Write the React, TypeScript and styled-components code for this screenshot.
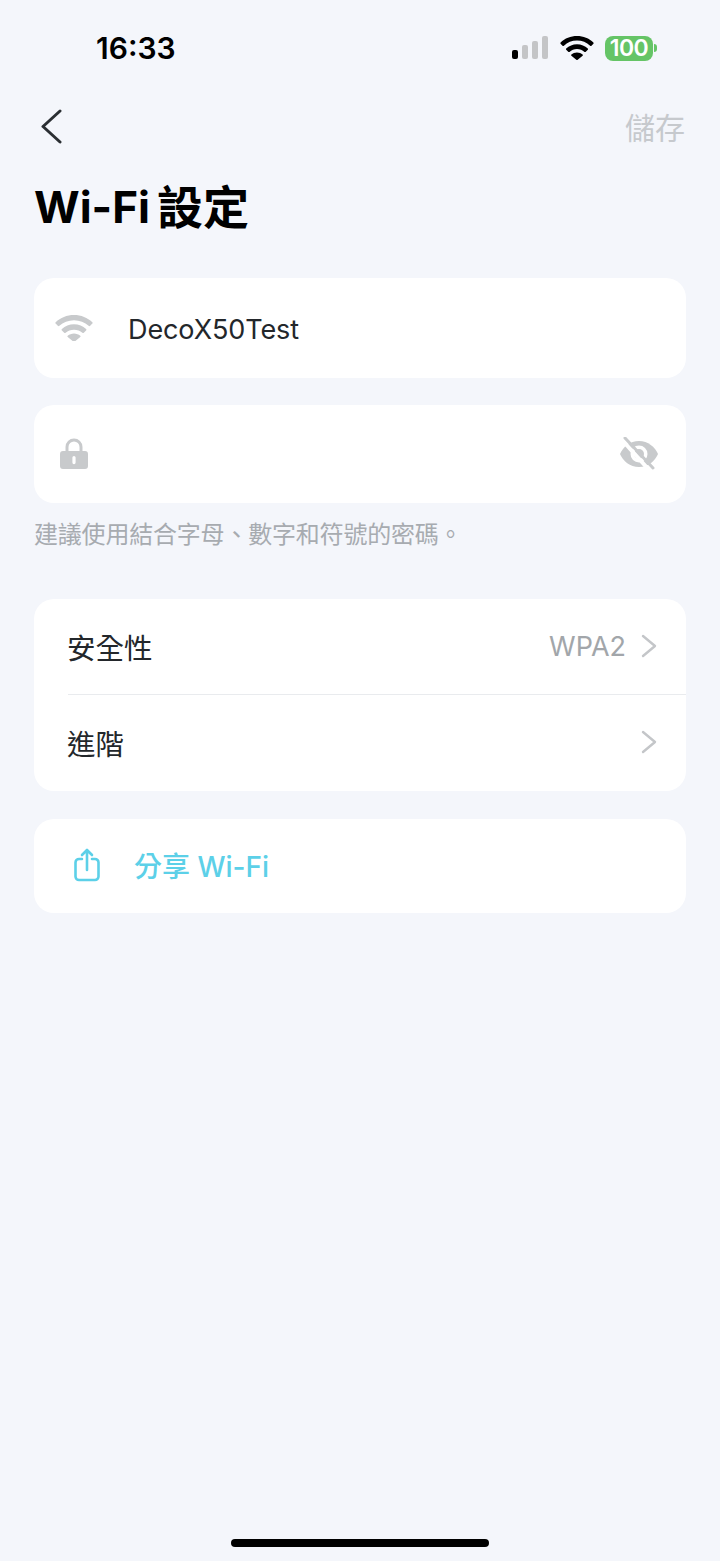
import styled, { createGlobalStyle } from "styled-components";

const GlobalStyle = createGlobalStyle`
  html, body {
    margin: 0;
    padding: 0;
    background: #f4f6fb;
  }
`;

const Page = styled.main`
  width: 720px;
  height: 1561px;
  box-sizing: border-box;
  display: flex;
  flex-direction: column;
  background: #f4f6fb;
  font-family: Inter, "Noto Sans CJK TC", sans-serif;
  color: #23272b;
  overflow: hidden;
`;

const StatusBar = styled.div`
  height: 96px;
  box-sizing: border-box;
  padding: 0 63px 0 96px;
  display: flex;
  align-items: center;
  justify-content: space-between;
`;

const Clock = styled.span`
  font-size: 30px;
  font-weight: 600;
  color: #000;
`;

const StatusIcons = styled.div`
  display: flex;
  align-items: center;
  gap: 11px;
`;

const Battery = styled.div`
  display: flex;
  align-items: center;
  gap: 1px;
`;

const BatteryBody = styled.span`
  width: 48px;
  height: 25px;
  border-radius: 8px;
  background: #65c466;
  color: #fff;
  font-size: 23px;
  font-weight: 600;
  letter-spacing: -0.5px;
  line-height: 25px;
  text-align: center;
`;

const BatteryTip = styled.span`
  width: 3px;
  height: 8px;
  border-radius: 0 3px 3px 0;
  background: #65c466;
`;

const NavBar = styled.nav`
  height: 60px;
  box-sizing: border-box;
  padding: 0 35px 0 41px;
  display: flex;
  align-items: center;
  justify-content: space-between;
`;

const SaveLabel = styled.span`
  font-size: 30px;
  color: #c6c9cd;
`;

const Title = styled.h1`
  margin: 21px 0 0 34px;
  height: 60px;
  display: flex;
  align-items: center;
  gap: 7px;
  font-size: 44px;
  line-height: 60px;
  font-weight: 700;
  color: #000;
`;

const TitleCjk = styled.span`
  font-size: 46px;
`;

const Form = styled.div`
  margin-top: 41px;
  padding: 0 34px;
  display: flex;
  flex-direction: column;
`;

const Card = styled.section<{ $gap?: number }>`
  background: #fff;
  border-radius: 20px;
  margin-top: ${(p) => p.$gap ?? 0}px;
  overflow: hidden;
`;

const FieldRow = styled.div<{ $height: number }>`
  height: ${(p) => p.$height}px;
  box-sizing: border-box;
  padding: 0 27px 0 20px;
  display: flex;
  align-items: center;
`;

const FieldIcon = styled.span`
  width: 40px;
  display: flex;
  justify-content: center;
`;

const FieldText = styled.span`
  margin-left: 34px;
  padding-top: 2px;
  font-size: 27px;
  letter-spacing: -0.1px;
  flex: 1;
`;

const Hint = styled.p`
  margin: 18px 0 0;
  height: 28px;
  font-size: 24px;
  letter-spacing: -0.2px;
  line-height: 28px;
  color: #a7abb0;
`;

const MenuRow = styled.div<{ $height: number; $divider?: boolean }>`
  position: relative;
  height: ${(p) => p.$height}px;
  box-sizing: border-box;
  padding: 0 29px 2px 34px;
  display: flex;
  align-items: center;
  font-size: 28.5px;

  ${(p) =>
    p.$divider &&
    `
    &::after {
      content: "";
      position: absolute;
      left: 34px;
      right: 0;
      bottom: 0;
      height: 1px;
      background: #e9ebee;
    }
  `}
`;

const MenuLabel = styled.span`
  flex: 1;
  margin-left: -1px;
`;

const MenuValue = styled.span`
  margin-right: 15px;
  font-size: 27px;
  color: #a2a6aa;
`;

const ShareRow = styled.div`
  height: 94px;
  box-sizing: border-box;
  padding: 0 0 2px 40px;
  display: flex;
  align-items: center;
  gap: 34px;
  font-size: 28px;
  font-weight: 500;
  color: #5cd0e8;
`;

const HomeIndicator = styled.div`
  width: 258px;
  height: 8px;
  border-radius: 4px;
  background: #000;
  margin: auto auto 14px;
`;

const Signal = () => (
  <svg width="38" height="24" viewBox="0 0 38 24">
    <rect x="1" y="14" width="6" height="9" rx="2" fill="#000" />
    <rect x="11" y="9" width="6" height="14" rx="2" fill="#c4c5c7" />
    <rect x="21" y="5" width="6" height="18" rx="2" fill="#c4c5c7" />
    <rect x="31" y="0" width="6" height="23" rx="2" fill="#c4c5c7" />
  </svg>
);

const WifiGlyph = ({ color, width }: { color: string; width: number }) => (
  <svg width={width} height={(width * 24) / 34} viewBox="0 0 34 24" fill={color}>
    <path d="M17 0C10.6 0 4.9 2.4.6 6.4c-.4.4-.4 1 0 1.300l1.900 2c.4.4 1 .4 1.400 0C7.300 6.500 12 4.600 17 4.600s9.700 1.900 13.100 5.100c.4.4 1 .4 1.400 0l1.900-2c.4-.3.4-.9 0-1.300C29.100 2.400 23.400 0 17 0z" />
    <path d="M17 8.300c-4.200 0-8 1.600-10.800 4.200-.4.400-.4 1 0 1.300l2 2c.3.400.9.400 1.300.100 2-1.700 4.600-2.800 7.500-2.800s5.500 1.100 7.500 2.800c.4.300 1 .3 1.300-.1l2-2c.4-.3.400-.9 0-1.300C25 9.900 21.200 8.300 17 8.300z" />
    <path d="M17 16.500c-2.200 0-4.200.8-5.600 2.100-.4.300-.4.800 0 1.200l4.900 3.900c.4.400 1 .4 1.400 0l4.900-3.900c.4-.4.4-.9 0-1.200-1.400-1.300-3.400-2.100-5.600-2.100z" />
  </svg>
);

const Chevron = ({
  width,
  height,
  color,
  stroke,
  flip,
}: {
  width: number;
  height: number;
  color: string;
  stroke: number;
  flip?: boolean;
}) => (
  <svg width={width} height={height} viewBox={`0 0 ${width} ${height}`} fill="none">
    <path
      d={
        flip
          ? `M${width - 2} 2 L2 ${height / 2} L${width - 2} ${height - 2}`
          : `M2 2 L${width - 2} ${height / 2} L2 ${height - 2}`
      }
      stroke={color}
      strokeWidth={stroke}
      strokeLinecap="round"
      strokeLinejoin="round"
    />
  </svg>
);

const Lock = () => (
  <svg width="28" height="32" viewBox="0 0 28 32">
    <path
      d="M7 14V9a7 7 0 0 1 14 0v5"
      fill="none"
      stroke="#c8cacc"
      strokeWidth="3"
    />
    <path
      fillRule="evenodd"
      fill="#c8cacc"
      d="M3 13h22a3 3 0 0 1 3 3v12a3 3 0 0 1-3 3H3a3 3 0 0 1-3-3V16a3 3 0 0 1 3-3zm11 5a1.600 1.600 0 0 0-1.600 1.600v5a1.600 1.600 0 0 0 3.200 0v-5A1.600 1.600 0 0 0 14 18z"
    />
  </svg>
);

// solid eye with a white ring round the pupil, slash has its halo on the lower side
const EyeOff = () => (
  <svg width="40" height="34" viewBox="0 0 40 34">
    <path
      fill="#c8cacc"
      d="M20 4C11 4 4 10 1 17c3 7 10 13 19 13s16-6 19-13C36 10 29 4 20 4z"
    />
    <circle cx="20" cy="17" r="8.500" fill="#fff" />
    <circle cx="20" cy="17" r="5" fill="#c8cacc" />
    <path d="M4 4 L31 34" stroke="#fff" strokeWidth="4" />
    <path d="M6 1 L34 31" stroke="#c8cacc" strokeWidth="3" strokeLinecap="round" />
  </svg>
);

const ShareIcon = () => (
  <svg width="26" height="34" viewBox="0 0 26 34" fill="none" stroke="#5cd0e8" strokeWidth="2.600" strokeLinecap="round" strokeLinejoin="round">
    <path d="M8 11H5a3.500 3.500 0 0 0-3.500 3.500v14A3.500 3.500 0 0 0 5 32h16a3.500 3.500 0 0 0 3.500-3.500v-14A3.500 3.500 0 0 0 21 11h-3" />
    <path d="M13 22V2M8 7 13 2l5 5" />
  </svg>
);

export default function App() {
  return (
    <Page>
      <GlobalStyle />
      <StatusBar>
        <Clock>16:33</Clock>
        <StatusIcons>
          <Signal />
          <WifiGlyph color="#000" width={34} />
          <Battery>
            <BatteryBody>100</BatteryBody>
            <BatteryTip />
          </Battery>
        </StatusIcons>
      </StatusBar>
      <NavBar>
        <Chevron width={21} height={35} color="#2b2f33" stroke={3} flip />
        <SaveLabel>儲存</SaveLabel>
      </NavBar>
      <Title>
        <span>Wi-Fi</span>
        <TitleCjk>設定</TitleCjk>
      </Title>
      <Form>
        <Card>
          <FieldRow $height={100}>
            <FieldIcon>
              <WifiGlyph color="#c8cacc" width={38} />
            </FieldIcon>
            <FieldText>DecoX50Test</FieldText>
          </FieldRow>
        </Card>
        <Card $gap={27}>
          <FieldRow $height={98}>
            <FieldIcon>
              <Lock />
            </FieldIcon>
            <FieldText />
            <EyeOff />
          </FieldRow>
        </Card>
        <Hint>建議使用結合字母、數字和符號的密碼。</Hint>
        <Card $gap={50}>
          <MenuRow $height={96} $divider>
            <MenuLabel>安全性</MenuLabel>
            <MenuValue>WPA2</MenuValue>
            <Chevron width={16} height={24} color="#c4c6c9" stroke={2.4} />
          </MenuRow>
          <MenuRow $height={96}>
            <MenuLabel>進階</MenuLabel>
            <Chevron width={16} height={24} color="#c4c6c9" stroke={2.4} />
          </MenuRow>
        </Card>
        <Card $gap={28}>
          <ShareRow>
            <ShareIcon />
            <span>分享 Wi-Fi</span>
          </ShareRow>
        </Card>
      </Form>
      <HomeIndicator />
    </Page>
  );
}
